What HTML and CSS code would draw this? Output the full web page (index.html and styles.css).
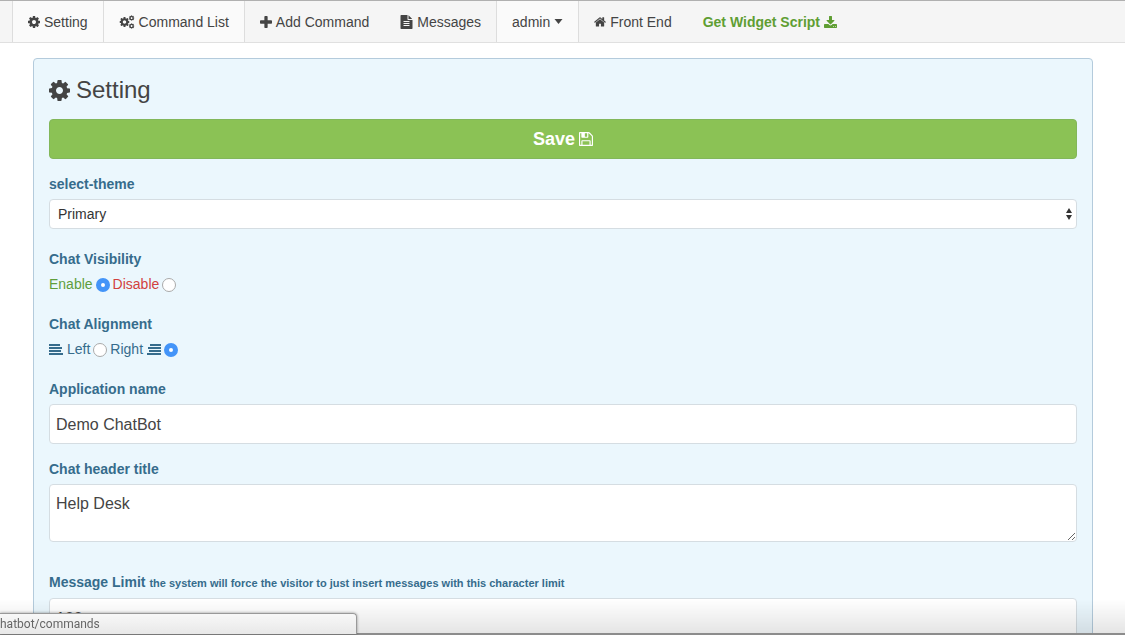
FILE: index.html
```html
<!DOCTYPE html>
<html lang="en">

<head>
  <meta charset="UTF-8" />
  <meta name="viewport" content="width=device-width, initial-scale=1.0" />
  <title>Setting</title>
  <link rel="stylesheet" href="styles.css">
</head>

<body>
  <!-- icon sprite -->
  <svg class="sprite" aria-hidden="true">
    <symbol id="cog" viewBox="128 128 1536 1536">
      <path d="M1152 896q0-106-75-181t-181-75-181 75-75 181 75 181 181 75 181-75 75-181zm512-109v222q0 12-8 23t-20 13l-185 28q-19 54-39 91 35 50 107 138 10 12 10 25t-9 23q-27 37-99 108t-94 71q-12 0-26-9l-138-108q-44 23-91 38-16 136-29 186-7 28-36 28h-222q-14 0-24.500-8.500t-11.500-21.500l-28-184q-49-16-90-37l-141 107q-10 9-25 9-14 0-25-11-126-114-165-168-7-10-7-23 0-12 8-23 15-21 51-66.500t54-70.500q-27-50-41-99l-183-27q-13-2-21-12.500t-8-23.500v-222q0-12 8-23t19-13l186-28q14-46 39-92-40-57-107-138-10-12-10-24 0-10 9-23 26-36 98.500-107.500t94.500-71.500q13 0 26 10l138 107q44-23 91-38 16-136 29-186 7-28 36-28h222q14 0 24.500 8.500t11.500 21.500l28 184q49 16 90 37l142-107q9-9 24-9 13 0 25 10 129 119 165 170 7 8 7 22 0 12-8 23-15 21-51 66.500t-54 70.500q26 50 41 98l183 28q13 2 21 12.500t8 23.500z" />
    </symbol>
    <symbol id="cogs" viewBox="0 0 1920 1792">
      <use href="#cog" x="0" y="256" width="1280" height="1280" />
      <use href="#cog" x="1190" y="30" width="720" height="720" />
      <use href="#cog" x="1190" y="1050" width="720" height="720" />
    </symbol>
    <symbol id="plus" viewBox="192 128 1408 1408">
      <path d="M1600 736v192q0 40-28 68t-68 28h-416v416q0 40-28 68t-68 28h-192q-40 0-68-28t-28-68v-416h-416q-40 0-68-28t-28-68v-192q0-40 28-68t68-28h416v-416q0-40 28-68t68-28h192q40 0 68 28t28 68v416h416q40 0 68 28t28 68z" />
    </symbol>
    <symbol id="file" viewBox="128 0 1536 1792">
      <path d="M1596 476q14 14 28 36h-472v-472q22 14 36 28zm-476 164h544v1056q0 40-28 68t-68 28h-1344q-40 0-68-28t-28-68v-1600q0-40 28-68t68-28h800v544q0 40 28 68t68 28zm160 736v-64q0-14-9-23t-23-9h-704q-14 0-23 9t-9 23v64q0 14 9 23t23 9h704q14 0 23-9t9-23zm0-256v-64q0-14-9-23t-23-9h-704q-14 0-23 9t-9 23v64q0 14 9 23t23 9h704q14 0 23-9t9-23zm0-256v-64q0-14-9-23t-23-9h-704q-14 0-23 9t-9 23v64q0 14 9 23t23 9h704q14 0 23-9t9-23z" />
    </symbol>
    <symbol id="home" viewBox="64 200 1664 1408">
      <path d="M1472 992v480q0 26-19 45t-45 19h-384v-384h-256v384h-384q-26 0-45-19t-19-45v-480q0-1 .5-3t.5-3l575-474 575 474q1 2 1 6zm223-69l-62 74q-8 9-21 11h-3q-13 0-21-7l-692-577-692 577q-12 8-24 7-13-2-21-11l-62-74q-8-10-7-23.500t11-21.500l719-599q32-26 76-26t76 26l244 204v-195q0-14 9-23t23-9h192q14 0 23 9t9 23v408l219 182q10 8 11 21.500t-7 23.500z" />
    </symbol>
    <symbol id="download" viewBox="64 0 1664 1536">
      <path d="M1344 1344q0-26-19-45t-45-19-45 19-19 45 19 45 45 19 45-19 19-45zm256 0q0-26-19-45t-45-19-45 19-19 45 19 45 45 19 45-19 19-45zm128-224v320q0 40-28 68t-68 28h-1472q-40 0-68-28t-28-68v-320q0-40 28-68t68-28h465l135 136q58 56 136 56t136-56l136-136h464q40 0 68 28t28 68zm-325-569q17 41-14 70l-448 448q-18 19-45 19t-45-19l-448-448q-31-29-14-70 17-39 59-39h256v-448q0-26 19-45t45-19h256q26 0 45 19t19 45v448h256q42 0 59 39z" />
    </symbol>
    <symbol id="floppy" viewBox="128 128 1536 1536">
      <path d="M512 1536h768v-384h-768v384zm896 0h128v-896q0-14-10-38.500t-20-34.500l-281-281q-10-10-34-20t-39-10v416q0 40-28 68t-68 28h-576q-40 0-68-28t-28-68v-416h-128v1280h128v-416q0-40 28-68t68-28h832q40 0 68 28t28 68v416zm-384-928v-320q0-13-9.500-22.500t-22.500-9.500h-192q-13 0-22.500 9.500t-9.500 22.500v320q0 13 9.500 22.500t22.500 9.500h192q13 0 22.500-9.500t9.500-22.500zm640 32v928q0 40-28 68t-68 28h-1344q-40 0-68-28t-28-68v-1344q0-40 28-68t68-28h928q40 0 88 20t76 48l280 280q28 28 48 76t20 88z" />
    </symbol>
    <symbol id="caret" viewBox="0 0 8 5">
      <path d="M0 0h8L4 5z" />
    </symbol>
    <symbol id="align-left" viewBox="0 0 14 11">
      <path d="M0 0h11v2H0zM0 3h13v2H0zM0 6h12v2H0zM0 9h14v2H0z" />
    </symbol>
    <symbol id="align-right" viewBox="0 0 14 11">
      <path d="M3 0h11v2H3zM1 3h13v2H1zM2 6h12v2H2zM0 9h14v2H0z" />
    </symbol>
    <symbol id="updown" viewBox="0 0 6 12">
      <path d="M3 0l3 5H0zM3 12l3-5H0z" />
    </symbol>
  </svg>

  <nav class="navbar">
    <a class="active" href="#"><svg class="icon"><use href="#cog" /></svg>Setting</a>
    <a class="active" href="#"><svg class="icon icon-wide"><use href="#cogs" /></svg>Command List</a>
    <a href="#"><svg class="icon icon-plus"><use href="#plus" /></svg>Add Command</a>
    <a href="#"><svg class="icon icon-tall"><use href="#file" /></svg>Messages</a>
    <a class="active" href="#">admin<svg class="icon icon-caret"><use href="#caret" /></svg></a>
    <a href="#"><svg class="icon"><use href="#home" /></svg>Front End</a>
    <a class="download" href="#">Get Widget Script<svg class="icon icon-download"><use href="#download" /></svg></a>
  </nav>

  <main class="container">
    <form class="panel">
      <h1><svg class="icon icon-title"><use href="#cog" /></svg>Setting</h1>

      <button class="save" type="button">Save<svg class="icon icon-save"><use href="#floppy" /></svg></button>

      <div class="row">
        <label class="title" for="theme">select-theme</label>
        <div class="select">
          <select id="theme">
            <option>Primary</option>
          </select>
          <svg class="arrows"><use href="#updown" /></svg>
        </div>
      </div>

      <fieldset class="row spaced">
        <legend class="title">Chat Visibility</legend>
        <div class="radios">
          <label class="success" for="enable">Enable</label>
          <input type="radio" name="visibility" id="enable" checked>
          <label class="danger" for="disable">Disable</label>
          <input type="radio" name="visibility" id="disable">
        </div>
      </fieldset>

      <fieldset class="row spaced">
        <legend class="title">Chat Alignment</legend>
        <div class="radios">
          <label for="left"><svg class="icon icon-align"><use href="#align-left" /></svg>Left</label>
          <input type="radio" name="alignment" id="left">
          <label for="right">Right<svg class="icon icon-align"><use href="#align-right" /></svg></label>
          <input type="radio" name="alignment" id="right" checked>
        </div>
      </fieldset>

      <div class="row spaced">
        <label class="title" for="appName">Application name</label>
        <input class="field" type="text" id="appName" value="Demo ChatBot">
      </div>

      <div class="row">
        <label class="title" for="headerTitle">Chat header title</label>
        <textarea class="field" id="headerTitle">Help Desk</textarea>
      </div>

      <div class="row limit">
        <label class="title" for="limit">Message Limit <small>the system will force the visitor to just insert messages with this character limit</small></label>
        <input class="field" type="text" id="limit" value="100">
      </div>
    </form>
  </main>

  <div class="shade"></div>
  <div class="status">hatbot/commands</div>
</body>

</html>
```
FILE: styles.css
```css
* {
  box-sizing: border-box;
}

html,
body {
  height: 100%;
}

body {
  margin: 0;
  overflow: hidden;
  background-color: #fff;
  border-top: 1px solid #b0b0b0;
  color: #444;
  font-family: "Helvetica Neue", "Liberation Sans", Arial, sans-serif;
  font-size: 14px;
  line-height: 20px;
}

.sprite {
  display: none;
}

.icon {
  flex: none;
  width: 12px;
  height: 12px;
  fill: currentColor;
}

.icon-wide {
  width: 16px;
  height: 14px;
}

.icon-tall {
  width: 13px;
  height: 14px;
}

.icon-caret {
  width: 9px;
  height: 5px;
}

.icon-download {
  width: 13px;
}

.icon-title {
  width: 21px;
  height: 21px;
}

.icon-save {
  width: 14px;
  height: 14px;
}

.icon-align {
  width: 14px;
  height: 11px;
}

/* navbar */
.navbar {
  display: flex;
  height: 42px;
  padding-left: 12px;
  background-color: #f5f5f5;
  border-bottom: 1px solid #e0e0e0;
}

.navbar a {
  display: flex;
  align-items: center;
  gap: 4px;
  padding: 0 15px;
  border: solid transparent;
  border-width: 0 1px;
  color: #444;
  text-decoration: none;
  white-space: nowrap;
}

.navbar a + a {
  margin-left: -1px;
}

.navbar .active {
  background-color: #fafafa;
  border-color: #ddd;
}

.navbar .download {
  color: #5f9e33;
  font-weight: bold;
}

/* panel */
.container {
  padding: 15px 32px 0 33px;
}

.panel {
  padding: 15px;
  background-color: #ebf7fd;
  border: 1px solid #b4cbdc;
  border-radius: 4px;
  color: #366c8c;
}

h1 {
  display: flex;
  align-items: center;
  gap: 6px;
  margin: 0 0 13px;
  color: #444;
  font-size: 24px;
  font-weight: normal;
  line-height: 32px;
}

.save {
  display: flex;
  align-items: center;
  justify-content: center;
  gap: 4px;
  width: 100%;
  height: 40px;
  border: 1px solid #82b75a;
  border-radius: 4px;
  background-color: #8bc255;
  color: #fff;
  font-family: inherit;
  font-size: 18px;
  font-weight: bold;
}

.row {
  margin: 15px 0 0;
  padding: 0;
  border: 0;
}

.spaced {
  margin-top: 20px;
}

.limit {
  margin-top: 30px;
}

.title {
  display: block;
  margin-bottom: 5px;
  padding: 0;
  font-weight: bold;
}

.title small {
  font-size: 11px;
}

.select {
  position: relative;
}

.select select {
  display: block;
  width: 100%;
  height: 30px;
  padding: 0 8px;
  appearance: none;
  background-color: #fff;
  border: 1px solid #d5dde2;
  border-radius: 4px;
  color: #333;
  font: inherit;
}

.arrows {
  position: absolute;
  top: 9px;
  right: 5px;
  width: 6px;
  height: 12px;
  fill: #333;
  pointer-events: none;
}

.radios {
  display: flex;
  align-items: center;
  gap: 3px;
}

.radios label {
  display: flex;
  align-items: center;
  gap: 4px;
}

.radios input {
  width: 14px;
  height: 14px;
  margin: 2px 0 0;
  appearance: none;
  background-color: #fff;
  border: 1px solid #aaa;
  border-radius: 50%;
}

.radios input:checked {
  background-color: #fff;
  border: 5px solid #4394f8;
}

.success {
  color: #5f9e3c;
}

.danger {
  color: #d2413f;
}

.field {
  display: block;
  width: 100%;
  height: 40px;
  padding: 5px 6px 3px;
  background-color: #fff;
  border: 1px solid #d5dde2;
  border-radius: 4px;
  color: #444;
  font-family: inherit;
  font-size: 16px;
  line-height: 28px;
}

textarea.field {
  height: 58px;
  resize: both;
}

/* bottom of the window */
.shade {
  position: fixed;
  right: 0;
  bottom: 0;
  left: 0;
  height: 36px;
  background: linear-gradient(rgba(0, 0, 0, 0), rgba(0, 0, 0, .1));
  border-bottom: 2px solid #8c8c8c;
  pointer-events: none;
}

.status {
  position: fixed;
  bottom: 1px;
  left: 0;
  width: 357px;
  height: 21px;
  background: linear-gradient(#f8f8f8, #e8e8e8);
  border: solid #999;
  border-width: 1px 1px 0 0;
  border-top-right-radius: 4px;
  box-shadow: 0 0 3px rgba(0, 0, 0, .4);
  color: #666;
  font-family: Roboto, sans-serif;
  font-size: 12px;
}
```
